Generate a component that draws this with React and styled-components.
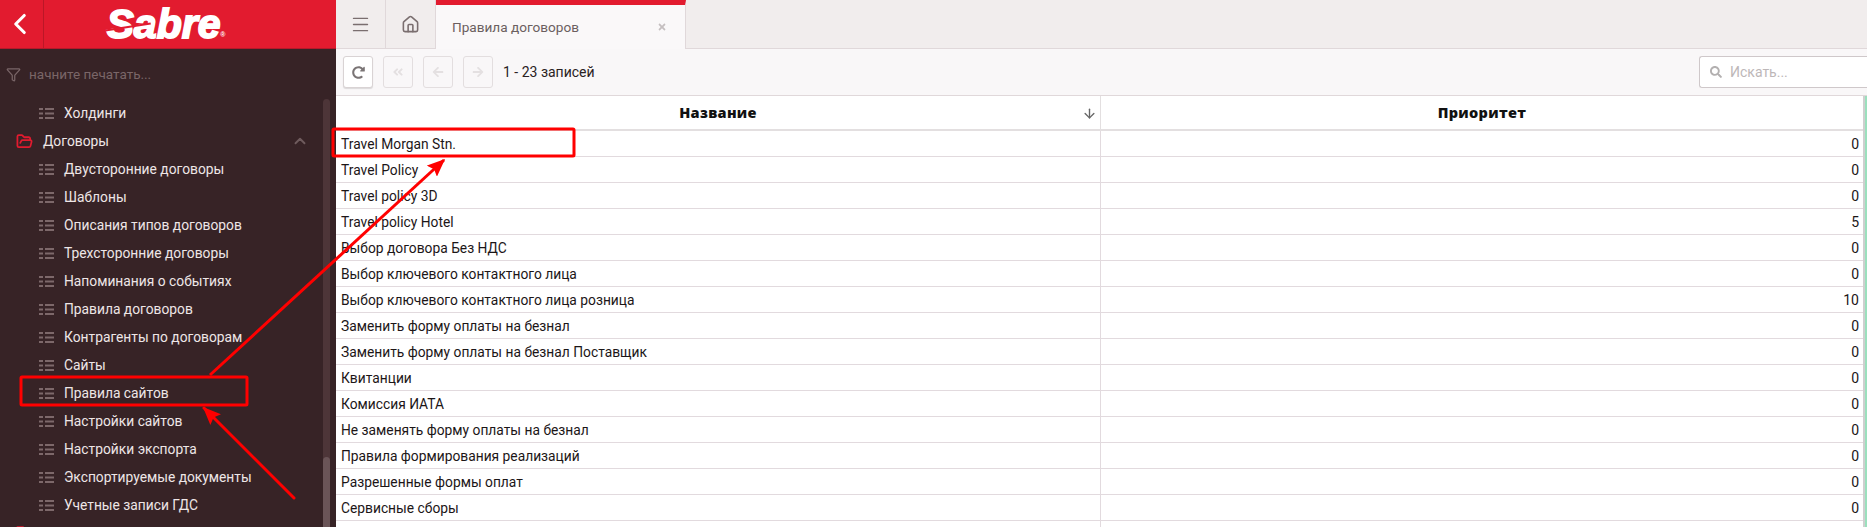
import React from "react";
import styled, { createGlobalStyle } from "styled-components";
import {
  FaFolder,
  FaRedoAlt,
  FaAngleDoubleLeft,
  FaArrowLeft,
  FaArrowRight,
  FaSearch,
  FaTimes,
} from "react-icons/fa";
import { Menu, House, Funnel, ChevronLeft, ChevronUp, FolderOpen, ArrowDown } from "lucide-react";

const GlobalStyle = createGlobalStyle`
  html, body {
    margin: 0;
    padding: 0;
    height: 527px;
    overflow: hidden;
    background: #fff;
    font-family: Roboto, "Noto Sans", sans-serif;
  }
  * { box-sizing: border-box; }
`;

const Page = styled.div`
  position: relative;
  display: flex;
  width: 1867px;
  height: 527px;
  overflow: hidden;
`;

const Sidebar = styled.aside`
  width: 336px;
  flex: none;
  display: flex;
  flex-direction: column;
  background: #372326;
  height: 527px;
  overflow: hidden;
`;

const SideHeader = styled.div`
  height: 49px;
  flex: none;
  display: flex;
  background: #e21b2f;
  border-bottom: 1px solid #b5192a;
`;

const BackButton = styled.div`
  width: 44px;
  display: flex;
  align-items: center;
  justify-content: center;
  padding-right: 4px;
  color: #fff;
  border-right: 1px solid #bb1727;
`;

const LogoBox = styled.div`
  flex: 1;
  display: flex;
  align-items: center;
  justify-content: center;
  padding-right: 53px;
`;

const Logo = styled.div`
  position: relative;
  font-family: "Liberation Sans", sans-serif;
  font-style: italic;
  font-weight: 700;
  font-size: 41px;
  line-height: 36px;
  letter-spacing: 0;
  color: #fff;
  -webkit-text-stroke: 1.8px #fff;

  sup {
    font-size: 7px;
    line-height: 0;
    letter-spacing: 0;
    -webkit-text-stroke: 0;
    font-style: normal;
    position: absolute;
    right: -5px;
    bottom: 7px;
  }

  &::after {
    content: "";
    position: absolute;
    left: -2px;
    top: 20px;
    width: 46px;
    height: 2px;
    background: #e21b2f;
    transform: rotate(-9deg);
  }
`;

const FilterRow = styled.div`
  height: 50px;
  flex: none;
  display: flex;
  align-items: center;
  padding-left: 6px;
  gap: 8px;
  color: #7a6668;
  font-size: 13.5px;
`;

const SideBody = styled.div`
  flex: 1;
  display: flex;
  min-height: 0;
`;

const NavList = styled.div`
  flex: 1;
  display: flex;
  flex-direction: column;
`;

const NavItem = styled.div`
  height: 28px;
  flex: none;
  display: flex;
  align-items: center;
  padding-left: ${(p) => (p.$folder ? "16px" : "39px")};
  gap: 10px;
  color: #eee6e6;
  font-size: 13.8px;
  white-space: nowrap;
`;

const Caret = styled.span`
  margin-left: auto;
  margin-right: 14px;
  color: #6f5b5d;
  display: flex;
`;

const FolderIcon = styled.span`
  color: #e21b2f;
  display: flex;
`;

const ScrollTrack = styled.div`
  width: 7px;
  flex: none;
  margin: 0 6px 0 0;
  border-radius: 4px 4px 0 0;
  background: #4d3538;
  display: flex;
  flex-direction: column;
  justify-content: flex-end;
`;

const ScrollThumb = styled.div`
  height: 70px;
  border-radius: 4px 4px 0 0;
  background: #6a5457;
`;

const Main = styled.main`
  flex: 1;
  min-width: 0;
  display: flex;
  flex-direction: column;
`;

const TabBar = styled.div`
  height: 49px;
  flex: none;
  display: flex;
  background: #f1eded;
  border-bottom: 1px solid #e0d8da;
`;

const TabIcon = styled.div`
  width: 50px;
  height: 48px;
  display: flex;
  align-items: center;
  justify-content: center;
  color: #7a6e6f;
  border-right: 1px solid #e0d8da;
`;

const ActiveTab = styled.div`
  width: 250px;
  height: 49px;
  display: flex;
  align-items: center;
  justify-content: space-between;
  padding: 0 18px 0 16px;
  background: #faf8f9;
  border-top: 5px solid #e21b2f;
  border-right: 1px solid #e0d8da;
  color: #6b5f60;
  font-size: 13.6px;

  svg { color: #c5bfc0; font-size: 10px; }
`;

const Toolbar = styled.div`
  height: 47px;
  flex: none;
  display: flex;
  align-items: center;
  padding-left: 7px;
  gap: 10px;
  background: #f9f7f8;
  border-bottom: 1px solid #e0d8da;
`;

const ToolButton = styled.div`
  width: 30px;
  height: 32px;
  display: flex;
  align-items: center;
  justify-content: center;
  background: ${(p) => (p.$off ? "#f9f7f8" : "#fff")};
  border: 1px solid ${(p) => (p.$off ? "#e3dedf" : "#d9d3d4")};
  border-radius: 3px;
  box-shadow: ${(p) => (p.$off ? "none" : "0 1px 1px rgba(0,0,0,0.12)")};
  color: ${(p) => (p.$off ? "#e4e0e1" : "#7a7475")};
  font-size: ${(p) => (p.$off ? "12px" : "13px")};
`;

const RecordCount = styled.span`
  font-size: 14px;
  color: #2a2223;
`;

const SearchBox = styled.div`
  margin-left: auto;
  width: 168px;
  height: 32px;
  display: flex;
  align-items: center;
  gap: 8px;
  padding-left: 10px;
  background: #fff;
  border: 1px solid #cfc8ca;
  border-right: none;
  border-radius: 3px 0 0 3px;
  color: #bdb7b8;
  font-size: 14px;
  svg { font-size: 12px; color: #b3b0b0; }
`;

const TableWrap = styled.div`
  flex: 1;
  min-height: 0;
  display: flex;
`;

const Table = styled.div`
  flex: 1;
  display: grid;
  grid-template-columns: 765px 1fr;
  grid-auto-rows: 26px;
  grid-template-rows: 35px;
  align-content: start;
  min-width: 0;
`;

const HeadCell = styled.div`
  position: relative;
  display: flex;
  align-items: center;
  justify-content: center;
  font-family: "Open Sans", sans-serif;
  font-size: 14.5px;
  font-weight: 800;
  letter-spacing: 0.3px;
  color: #111;
  background: #fff;
  border-bottom: 2px solid #e3dfe0;
  border-right: ${(p) => (p.$last ? "none" : "1px solid #e3dfe0")};
`;

const SortMark = styled.span`
  position: absolute;
  right: 3px;
  top: 10px;
  color: #666;
  display: flex;
`;

const NameCell = styled.div`
  display: flex;
  align-items: center;
  padding-left: 5px;
  font-size: 13.8px;
  color: #1c1617;
  background: #fff;
  border-bottom: 1px solid #e2dade;
  border-right: 1px solid #e2dade;
`;

const ValueCell = styled.div`
  display: flex;
  align-items: center;
  justify-content: flex-end;
  padding-right: 4px;
  font-size: 14px;
  color: #1c1617;
  background: #fff;
  border-bottom: 1px solid #e2dade;
`;

const TableScroll = styled.div`
  width: 4px;
  flex: none;
  background: #cfcfcf;
  border-right: 2px solid #9be0bd;
`;

const Annotations = styled.svg`
  position: absolute;
  left: 0;
  top: 0;
  pointer-events: none;
`;

const navItems = [
  "Двусторонние договоры",
  "Шаблоны",
  "Описания типов договоров",
  "Трехсторонние договоры",
  "Напоминания о событиях",
  "Правила договоров",
  "Контрагенты по договорам",
  "Сайты",
  "Правила сайтов",
  "Настройки сайтов",
  "Настройки экспорта",
  "Экспортируемые документы",
  "Учетные записи ГДС",
];

const rows = [
  ["Travel Morgan Stn.", 0],
  ["Travel Policy", 0],
  ["Travel policy 3D", 0],
  ["Travel policy Hotel", 5],
  ["Выбор договора Без НДС", 0],
  ["Выбор ключевого контактного лица", 0],
  ["Выбор ключевого контактного лица розница", 10],
  ["Заменить форму оплаты на безнал", 0],
  ["Заменить форму оплаты на безнал Поставщик", 0],
  ["Квитанции", 0],
  ["Комиссия ИАТА", 0],
  ["Не заменять форму оплаты на безнал", 0],
  ["Правила формирования реализаций", 0],
  ["Разрешенные формы оплат", 0],
  ["Сервисные сборы", 0],
  ["", ""],
];

function ListIcon() {
  return (
    <svg width="15" height="11" viewBox="0 0 15 11" fill="#7d686a">
      <rect x="0" y="0" width="4" height="2" />
      <rect x="0" y="4.5" width="4" height="2" />
      <rect x="0" y="9" width="4" height="2" />
      <rect x="6" y="0" width="9" height="2" />
      <rect x="6" y="4.5" width="9" height="2" />
      <rect x="6" y="9" width="9" height="2" />
    </svg>
  );
}

function App() {
  return (
    <Page>
      <GlobalStyle />
      <Sidebar>
        <SideHeader>
          <BackButton>
            <ChevronLeft size={34} strokeWidth={2.2} />
          </BackButton>
          <LogoBox>
            <Logo>
              Sabre<sup>®</sup>
            </Logo>
          </LogoBox>
        </SideHeader>
        <FilterRow>
          <Funnel size={15} strokeWidth={2} />
          начните печатать...
        </FilterRow>
        <SideBody>
          <NavList>
            <NavItem>
              <ListIcon />
              Холдинги
            </NavItem>
            <NavItem $folder>
              <FolderIcon>
                <FolderOpen size={17} strokeWidth={2.5} />
              </FolderIcon>
              Договоры
              <Caret>
                <ChevronUp size={18} strokeWidth={2.5} />
              </Caret>
            </NavItem>
            {navItems.map((name) => (
              <NavItem key={name}>
                <ListIcon />
                {name}
              </NavItem>
            ))}
            <NavItem $folder>
              <FolderIcon>
                <FaFolder size={18} />
              </FolderIcon>
            </NavItem>
          </NavList>
          <ScrollTrack>
            <ScrollThumb />
          </ScrollTrack>
        </SideBody>
      </Sidebar>
      <Main>
        <TabBar>
          <TabIcon>
            <Menu size={21} strokeWidth={1.6} />
          </TabIcon>
          <TabIcon>
            <House size={19} strokeWidth={2} />
          </TabIcon>
          <ActiveTab>
            Правила договоров
            <FaTimes />
          </ActiveTab>
        </TabBar>
        <Toolbar>
          <ToolButton>
            <FaRedoAlt />
          </ToolButton>
          <ToolButton $off>
            <FaAngleDoubleLeft />
          </ToolButton>
          <ToolButton $off>
            <FaArrowLeft />
          </ToolButton>
          <ToolButton $off>
            <FaArrowRight />
          </ToolButton>
          <RecordCount>1 - 23 записей</RecordCount>
          <SearchBox>
            <FaSearch />
            Искать...
          </SearchBox>
        </Toolbar>
        <TableWrap>
          <Table>
            <HeadCell>
              Название
              <SortMark>
                <ArrowDown size={15} strokeWidth={2.2} />
              </SortMark>
            </HeadCell>
            <HeadCell $last>Приоритет</HeadCell>
            {rows.map(([name, value], i) => (
              <React.Fragment key={i}>
                <NameCell>{name}</NameCell>
                <ValueCell>{value}</ValueCell>
              </React.Fragment>
            ))}
          </Table>
          <TableScroll />
        </TableWrap>
      </Main>
      <Annotations width="1867" height="527" viewBox="0 0 1867 527">
        <defs>
          <marker id="head" markerWidth="6" markerHeight="5" refX="5.5" refY="2.5" orient="auto">
            <path d="M0 0 L6 2.5 L0 5 L1 2.5 Z" fill="#f00" />
          </marker>
        </defs>
        <rect x="333" y="129" width="241" height="27" rx="1" fill="none" stroke="#f00" strokeWidth="3" />
        <rect x="21" y="377" width="226" height="28" rx="1" fill="none" stroke="#f00" strokeWidth="3" />
        <line x1="210" y1="375" x2="444" y2="160" stroke="#f00" strokeWidth="3" markerEnd="url(#head)" />
        <line x1="294" y1="498" x2="204" y2="408" stroke="#f00" strokeWidth="3" strokeLinecap="round" markerEnd="url(#head)" />
      </Annotations>
    </Page>
  );
}

export default App;
